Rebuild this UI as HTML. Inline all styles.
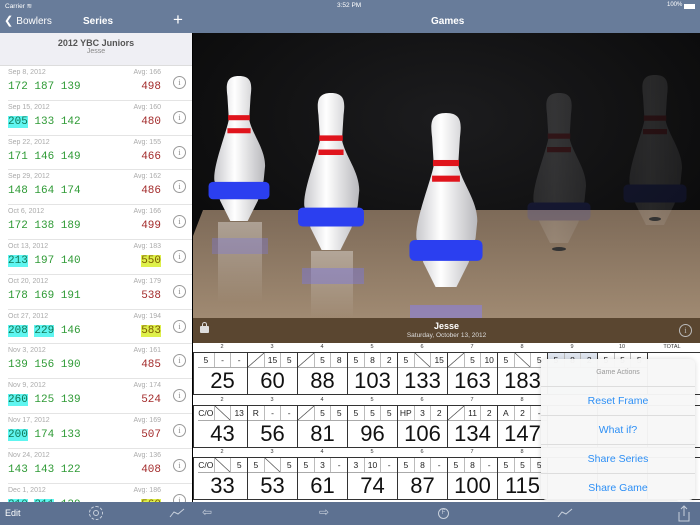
<!DOCTYPE html>
<html><head><meta charset="utf-8"><style>
*{margin:0;padding:0;box-sizing:border-box}
body{width:700px;height:525px;overflow:hidden;position:relative;font-family:"Liberation Sans",sans-serif;background:#fff}
.abs{position:absolute}
#top{left:0;top:0;width:700px;height:33px;background:#687c9a;color:#fff}
#left{left:0;top:33px;width:192px;height:469px;background:#fff;overflow:hidden}
.sec{height:33px;background:#efeff4;text-align:center;border-bottom:1px solid #ddd}
.row{position:relative;height:34.8px;border-bottom:1px solid #e4e4e4;margin-left:8px}
.d{position:absolute;left:0;top:3px;font-size:7px;color:#aaa}
.a{position:absolute;right:31px;top:3px;font-size:7px;color:#aaa}
.sc{position:absolute;left:0;top:15px;font-family:"Liberation Mono",monospace;font-size:11px;color:#2e9a35;white-space:pre}
.h{background:#5ff5f0;color:#175}
.t{position:absolute;right:31px;top:15px;font-family:"Liberation Mono",monospace;font-size:11px;color:#a32b2b}
.y{background:#def04a;color:#7a5a00}
.inf{position:absolute;left:165px;top:10px;width:13px;height:13px;border:1px solid #999;border-radius:50%;font-size:8px;color:#888;text-align:center;line-height:11px;font-family:"Liberation Serif",serif}
#bl{left:0;top:502px;width:193px;height:23px;background:#5d7191}
#br{left:193px;top:502px;width:507px;height:23px;background:#5d7191}
.blk{position:absolute;left:193px;width:507px;height:52px}
.lab{height:9px;position:relative;font-size:5.5px;color:#333}
.lab span{position:absolute;top:1px;width:50px;text-align:center}
.fs{position:absolute;top:9px;left:0;height:43px;width:507px;display:flex;border-top:1.5px solid #333;border-bottom:1.5px solid #333;padding-left:4px;border-left:1.5px solid #333}
.f{width:50px;border-right:1.5px solid #333;flex:none}
.r{display:flex;height:15px;border-bottom:1px solid #aaa}
.r i{flex:1;font-style:normal;font-size:8.5px;text-align:center;border-left:1px solid #bbb;line-height:14px;color:#222}
.r i:first-child{border-left:none}
.f b{display:block;font-size:22px;font-weight:normal;text-align:center;line-height:26px;color:#111}
.s{background:linear-gradient(to bottom right,transparent 47%,#333 50%,transparent 53%)}
.p{background:linear-gradient(to top right,transparent 47%,#333 50%,transparent 53%)}
#pop{left:541px;top:359px;width:154px;height:141px;background:rgba(247,247,247,0.97);border-radius:6px;box-shadow:0 0 6px rgba(0,0,0,0.15)}
#pop div{height:29px;text-align:center;line-height:29px;color:#2d8ff5;font-size:10.5px;border-top:1px solid #ddd}
</style></head><body>
<div id="top" class="abs">
 <div class="abs" style="left:5px;top:2px;font-size:6.5px">Carrier ≋</div>
 <div class="abs" style="left:337px;top:2px;font-size:6.5px">3:52 PM</div>
 <div class="abs" style="left:667px;top:2px;font-size:6px">100%</div>
 <div class="abs" style="left:684px;top:4px;width:11px;height:5px;background:#fff"></div>
 <div class="abs" style="left:4px;top:14px;font-size:11px">&#10094; <span style="font-size:10px">Bowlers</span></div>
 <div class="abs" style="left:83px;top:16px;font-size:10px;font-weight:bold">Series</div>
 <div class="abs" style="left:173px;top:10px;font-size:17px;font-weight:300">+</div>
 <div class="abs" style="left:431px;top:16px;font-size:10px;font-weight:bold">Games</div>
</div>
<div id="left" class="abs">
 <div class="sec"><div style="font-size:9px;font-weight:bold;color:#555;padding-top:5px">2012 YBC Juniors</div><div style="font-size:7px;color:#888">Jesse</div></div>
 <div class="row"><span class="d">Sep 8, 2012</span><span class="a">Avg: 166</span><span class="sc">172 187 139</span><span class="t">498</span><span class="inf">i</span></div>
 <div class="row"><span class="d">Sep 15, 2012</span><span class="a">Avg: 160</span><span class="sc"><span class="h">205</span> 133 142</span><span class="t">480</span><span class="inf">i</span></div>
 <div class="row"><span class="d">Sep 22, 2012</span><span class="a">Avg: 155</span><span class="sc">171 146 149</span><span class="t">466</span><span class="inf">i</span></div>
 <div class="row"><span class="d">Sep 29, 2012</span><span class="a">Avg: 162</span><span class="sc">148 164 174</span><span class="t">486</span><span class="inf">i</span></div>
 <div class="row"><span class="d">Oct 6, 2012</span><span class="a">Avg: 166</span><span class="sc">172 138 189</span><span class="t">499</span><span class="inf">i</span></div>
 <div class="row"><span class="d">Oct 13, 2012</span><span class="a">Avg: 183</span><span class="sc"><span class="h">213</span> 197 140</span><span class="t y">550</span><span class="inf">i</span></div>
 <div class="row"><span class="d">Oct 20, 2012</span><span class="a">Avg: 179</span><span class="sc">178 169 191</span><span class="t">538</span><span class="inf">i</span></div>
 <div class="row"><span class="d">Oct 27, 2012</span><span class="a">Avg: 194</span><span class="sc"><span class="h">208</span> <span class="h">229</span> 146</span><span class="t y">583</span><span class="inf">i</span></div>
 <div class="row"><span class="d">Nov 3, 2012</span><span class="a">Avg: 161</span><span class="sc">139 156 190</span><span class="t">485</span><span class="inf">i</span></div>
 <div class="row"><span class="d">Nov 9, 2012</span><span class="a">Avg: 174</span><span class="sc"><span class="h">260</span> 125 139</span><span class="t">524</span><span class="inf">i</span></div>
 <div class="row"><span class="d">Nov 17, 2012</span><span class="a">Avg: 169</span><span class="sc"><span class="h">200</span> 174 133</span><span class="t">507</span><span class="inf">i</span></div>
 <div class="row"><span class="d">Nov 24, 2012</span><span class="a">Avg: 136</span><span class="sc">143 143 122</span><span class="t">408</span><span class="inf">i</span></div>
 <div class="row"><span class="d">Dec 1, 2012</span><span class="a">Avg: 186</span><span class="sc"><span class="h">210</span> <span class="h">211</span> 139</span><span class="t y">560</span><span class="inf">i</span></div>
</div>
<div class="abs" style="left:192px;top:33px;width:1px;height:469px;background:#000"></div>
<svg class="abs" style="left:193px;top:33px" width="507" height="285" viewBox="193 33 507 285">
 <defs>
  <radialGradient id="bg" cx="0.5" cy="0.3" r="0.8"><stop offset="0" stop-color="#1c1c1e"/><stop offset="1" stop-color="#060606"/></radialGradient>
  <linearGradient id="fl" x1="0" y1="0" x2="0" y2="1"><stop offset="0" stop-color="#7d6a58"/><stop offset="1" stop-color="#a08a72"/></linearGradient>
  <linearGradient id="pw" x1="0" y1="0" x2="1" y2="0"><stop offset="0" stop-color="#c8c8cc"/><stop offset="0.4" stop-color="#ffffff"/><stop offset="1" stop-color="#b8b8bc"/></linearGradient>
  <linearGradient id="rf" x1="0" y1="0" x2="0" y2="1"><stop offset="0" stop-color="#fff" stop-opacity="0.35"/><stop offset="1" stop-color="#fff" stop-opacity="0"/></linearGradient>
  <g id="pin">
   <path d="M0,0 C9,0 9,6 8,14 L7,30 C9,40 18,50 18,62 L17,72 L13,86 L6,100 L-6,100 L-13,86 L-17,72 C-18,62 -9,40 -7,30 L-8,14 C-9,6 -9,0 0,0Z" fill="url(#pw)"/>
   <rect x="-7.5" y="27" width="15" height="3.5" fill="#e0141c"/>
   <rect x="-8" y="36" width="16" height="3.5" fill="#e0141c"/>
   <rect x="-21" y="73" width="42" height="12" rx="3" fill="#2b3ff0"/>
  </g>
 </defs>
 <rect x="193" y="33" width="507" height="285" fill="url(#bg)"/>
 <polygon points="203,210 700,210 700,318 193,318 193,236" fill="url(#fl)"/>
 <rect x="218" y="222" width="44" height="80" fill="url(#rf)"/>
 <rect x="212" y="238" width="56" height="16" fill="#7a78e0" opacity="0.35"/>
 <rect x="311" y="251" width="42" height="67" fill="url(#rf)"/>
 <rect x="302" y="268" width="62" height="16" fill="#7a78e0" opacity="0.45"/>
 <rect x="410" y="305" width="72" height="13" fill="#8a80e0" opacity="0.6"/>
 <use href="#pin" transform="translate(239,76) scale(1.45)"/>
 <use href="#pin" transform="translate(331,93) scale(1.57)"/>
 <use href="#pin" transform="translate(446,113) scale(1.74)"/>
 <use href="#pin" transform="translate(559,93) scale(1.5)" opacity="0.13"/>
 <use href="#pin" transform="translate(655,75) scale(1.5)" opacity="0.1"/>
 <ellipse cx="559" cy="249" rx="7" ry="2" fill="#333"/>
 <ellipse cx="655" cy="219" rx="6" ry="2" fill="#333"/>
</svg>
<div class="abs" style="left:193px;top:318px;width:507px;height:25px;background:#5a4630;color:#fff">
 <div class="abs" style="left:7px;top:8px;width:9px;height:7px;background:#ddd;border-radius:1px"></div>
 <div class="abs" style="left:9px;top:4px;width:5px;height:5px;border:1.5px solid #ddd;border-radius:3px 3px 0 0;border-bottom:none"></div>
 <div class="abs" style="left:0;width:507px;top:3px;text-align:center;font-size:9px;font-weight:bold">Jesse</div>
 <div class="abs" style="left:0;width:507px;top:14px;text-align:center;font-size:6.5px;color:#ddd">Saturday, October 13, 2012</div>
 <div class="abs" style="left:486px;top:6px;width:13px;height:13px;border:1px solid #bbb;border-radius:50%;font-size:8px;color:#bbb;text-align:center;line-height:11px;font-family:'Liberation Serif',serif">i</div>
</div>

<div class="blk" style="top:343px">
 <div class="lab"><span style="left:4px">2</span><span style="left:54px">3</span><span style="left:104px">4</span><span style="left:154px">5</span><span style="left:204px">6</span><span style="left:254px">7</span><span style="left:304px">8</span><span style="left:354px">9</span><span style="left:404px">10</span><span style="left:454px">TOTAL</span></div>
 <div class="fs">
  <div class="f"><div class="r"><i>5</i><i>-</i><i>-</i></div><b>25</b></div>
  <div class="f"><div class="r"><i class="s"></i><i>15</i><i>5</i></div><b>60</b></div>
  <div class="f"><div class="r"><i class="s"></i><i>5</i><i>8</i></div><b>88</b></div>
  <div class="f"><div class="r"><i>5</i><i>8</i><i>2</i></div><b>103</b></div>
  <div class="f"><div class="r"><i>5</i><i class="p"></i><i>15</i></div><b>133</b></div>
  <div class="f"><div class="r"><i class="s"></i><i>5</i><i>10</i></div><b>163</b></div>
  <div class="f"><div class="r"><i>5</i><i class="p"></i><i>5</i></div><b>183</b></div>
  <div class="f" style="background:#e0e6f0"><div class="r"><i>5</i><i>8</i><i>2</i></div><b></b></div>
  <div class="f"><div class="r"><i>5</i><i>5</i><i>5</i></div><b></b></div>
  <div class="f" style="width:53px"></div>
 </div>
</div>
<div class="blk" style="top:395.5px">
 <div class="lab"><span style="left:4px">2</span><span style="left:54px">3</span><span style="left:104px">4</span><span style="left:154px">5</span><span style="left:204px">6</span><span style="left:254px">7</span><span style="left:304px">8</span></div>
 <div class="fs">
  <div class="f"><div class="r"><i>C/O</i><i class="p"></i><i>13</i></div><b>43</b></div>
  <div class="f"><div class="r"><i>R</i><i>-</i><i>-</i></div><b>56</b></div>
  <div class="f"><div class="r"><i class="s"></i><i>5</i><i>5</i></div><b>81</b></div>
  <div class="f"><div class="r"><i>5</i><i>5</i><i>5</i></div><b>96</b></div>
  <div class="f"><div class="r"><i>HP</i><i>3</i><i>2</i></div><b>106</b></div>
  <div class="f"><div class="r"><i class="s"></i><i>11</i><i>2</i></div><b>134</b></div>
  <div class="f"><div class="r"><i>A</i><i>2</i><i>-</i></div><b>147</b></div>
  <div class="f"></div><div class="f"></div><div class="f" style="width:53px"></div>
 </div>
</div>
<div class="blk" style="top:448px">
 <div class="lab"><span style="left:4px">2</span><span style="left:54px">3</span><span style="left:104px">4</span><span style="left:154px">5</span><span style="left:204px">6</span><span style="left:254px">7</span><span style="left:304px">8</span></div>
 <div class="fs">
  <div class="f"><div class="r"><i>C/O</i><i class="p"></i><i>5</i></div><b>33</b></div>
  <div class="f"><div class="r"><i>5</i><i class="p"></i><i>5</i></div><b>53</b></div>
  <div class="f"><div class="r"><i>5</i><i>3</i><i>-</i></div><b>61</b></div>
  <div class="f"><div class="r"><i>3</i><i>10</i><i>-</i></div><b>74</b></div>
  <div class="f"><div class="r"><i>5</i><i>8</i><i>-</i></div><b>87</b></div>
  <div class="f"><div class="r"><i>5</i><i>8</i><i>-</i></div><b>100</b></div>
  <div class="f"><div class="r"><i>5</i><i>5</i><i>5</i></div><b>115</b></div>
  <div class="f"></div><div class="f"></div><div class="f" style="width:53px"></div>
 </div>
</div>

<div id="pop" class="abs">
 <div style="border-top:none;height:27px;line-height:27px;font-size:7px;color:#999">Game Actions</div>
 <div>Reset Frame</div>
 <div>What if?</div>
 <div>Share Series</div>
 <div>Share Game</div>
</div>
<div class="abs" style="left:677px;top:500px;width:0;height:0;border-left:8px solid transparent;border-right:8px solid transparent;border-top:7px solid #f7f7f7"></div>

<div id="bl" class="abs">
 <div class="abs" style="left:5px;top:6px;font-size:9px;color:#fff">Edit</div>
 <div class="abs" style="left:89px;top:4px;width:14px;height:14px;border:1.5px dashed #c8d0dc;border-radius:50%"></div>
 <div class="abs" style="left:93px;top:8px;width:6px;height:6px;border:1px solid #c8d0dc;border-radius:50%"></div>
 <svg class="abs" style="left:169px;top:6px" width="16" height="10"><polyline points="1,9 5,4 9,6 15,1" fill="none" stroke="#c8d0dc" stroke-width="1"/></svg>
</div>
<div id="br" class="abs">
 <div class="abs" style="left:9px;top:3px;font-size:12px;color:#c8d0dc">&#8678;</div>
 <div class="abs" style="left:126px;top:3px;font-size:12px;color:#c8d0dc">&#8680;</div>
 <div class="abs" style="left:245px;top:6px;width:11px;height:11px;border:1px solid #c8d0dc;border-radius:50%;font-size:6px;color:#c8d0dc;text-align:center;line-height:9px">F</div>
 <svg class="abs" style="left:364px;top:6px" width="16" height="10"><polyline points="1,9 5,4 9,6 15,1" fill="none" stroke="#c8d0dc" stroke-width="1"/></svg>
 <svg class="abs" style="left:485px;top:3px" width="12" height="17"><path d="M1,7 V16 H11 V7 M6,1 V11 M3,4 L6,1 L9,4" fill="none" stroke="#c8d0dc" stroke-width="1"/></svg>
</div>
</body></html>
